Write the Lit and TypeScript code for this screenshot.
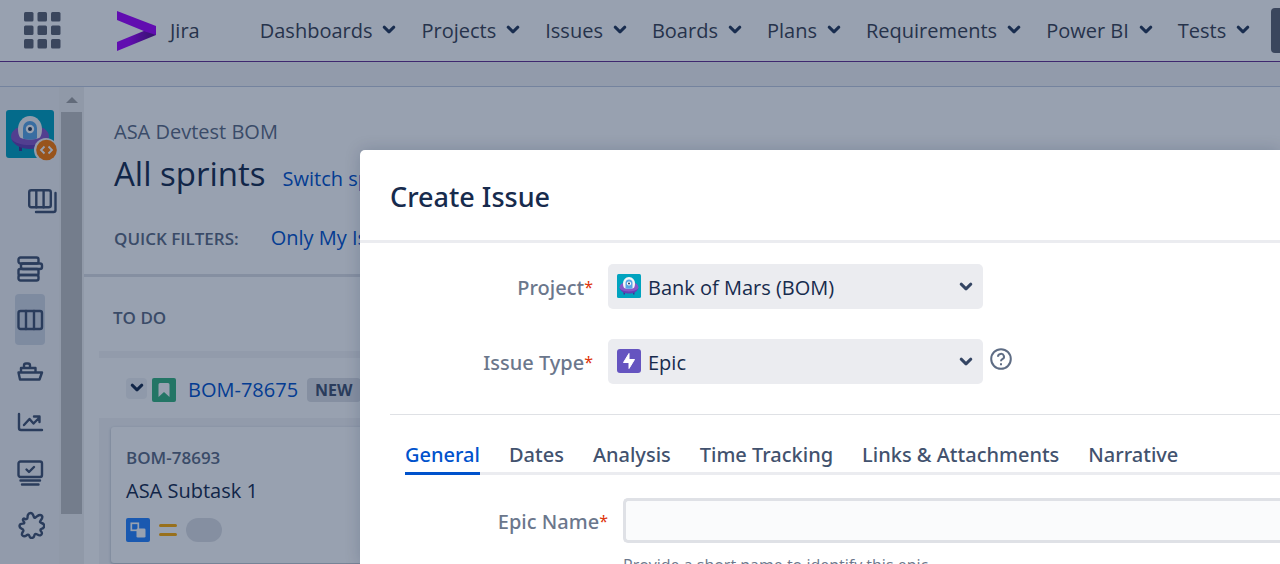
import { LitElement, html, svg, css } from "lit";
import { customElement, state } from "lit/decorators.js";

const chevron = html`<svg class="chevron" width="14" height="10" viewBox="0 0 14 10" aria-hidden="true">
  <path d="M2.200 2.200 7 6.800l4.800-4.600" fill="none" stroke="currentColor" stroke-width="3" stroke-linecap="round" stroke-linejoin="round" />
</svg>`;

const avatar = (size: number) => html`<svg class="avatar" width=${size} height=${size} viewBox="0 0 48 48" aria-hidden="true">
  <rect width="48" height="48" rx="3" fill="#00a3bf" />
  <path d="M13 34v7h3v-7zM32 34v7h3v-7z" fill="#403294" />
  <ellipse cx="24" cy="26.500" rx="19" ry="11.500" fill="#8757c8" />
  <path d="M5.500 29c2 6 9.500 10 18.500 10s16.500-4 18.500-10c-4 4-10 6-18.500 6s-15-2-18.500-6z" fill="#6440b5" />
  <path d="M12 19c0-7 5-13 12-13s12 6 12 13c0 3-.5 6-2 8.500-3 2.500-17 2.500-20 0-1.500-2.500-2-5.500-2-8.500z" fill="#f4f5f7" />
  <path d="M17 28.500V18a7 7 0 0 1 14 0v10.500c-4 1.500-10 1.500-14 0z" fill="#5aa6e6" />
  <circle cx="24" cy="19" r="4.200" fill="#fff" />
  <circle cx="24" cy="19" r="2" fill="#253858" />
</svg>`;

const stroked = (body: unknown) => html`<svg width="30" height="30" viewBox="0 0 30 30" fill="none" stroke="currentColor" stroke-width="2.400" stroke-linejoin="round" stroke-linecap="round" aria-hidden="true">${body}</svg>`;

const sideLinks = [
  { name: "Backlog", active: false, icon: svg`<rect x="3.500" y="3.500" width="20" height="6" rx="2"/><rect x="6" y="9.500" width="21" height="5.500" rx="2"/><rect x="3.500" y="15" width="20" height="6" rx="1.500"/><rect x="3.500" y="21" width="20" height="5.500" rx="2"/>` },
  { name: "Active sprints", active: true, icon: svg`<rect x="3.500" y="6" width="23.500" height="18" rx="2"/><path d="M11 6v18M19 6v18"/>` },
  { name: "Releases", active: false, icon: svg`<path d="M3.500 16.500h23.500l-2.500 7H5zM6 16.500V12h14.500v4.500M9 12V9.500a2 2 0 0 1 2-2h2a2 2 0 0 1 2 2V12"/>` },
  { name: "Reports", active: false, icon: svg`<path d="M4 7v14a2 2 0 0 0 2 2h21M9 18l5.500-6 4 4.500 6-6M19 9.500h5.500V15"/>` },
  { name: "Tests", active: false, icon: svg`<rect x="3.500" y="3.500" width="23.500" height="15.500" rx="2"/><path d="m11.500 11.500 2.500 2.500 5-5M5.500 22.500h19.500M7 26.500h16.500"/>` },
  { name: "Add-ons", active: false, icon: svg`<path transform="translate(1 1)" d="M8 8.500c1.500 1 3.500 1 3.500-.800 0-1.500.300-4.700 3-4.700s2.800 2.700 3.500 4.200c.600 1.200 2 0 3.500-1.200s4-1.500 4.700.200c.700 2-.7 3.300-1.700 4.500s-.3 2 1 2.300c1.800.500 3 1.500 2.700 3.300s-1.500 2.200-2.700 2.500c-1.500.400-1.200 1.700-.3 2.700 1.200 1.400.800 3.300-.9 3.800-1.600.500-2.800-.8-4-1.300-1.300-.5-1.700.5-2 1.700-.3 1.300-1.300 2.300-2.800 2.300s-2-1.300-2.300-2.500c-.4-1.400-1.700-1-2.900 0-1.300 1-3.500 1-4.200-.5-.7-1.600.6-2.700 1.200-4 .500-1.300-.5-1.800-1.800-2.400s-2.300-1.800-1.800-3.400 1.800-1.600 3.300-1.600 1.700-1.100.7-2.100c-1.200-1.200-1-2.800.3-3z"/>` },
];

@customElement("app-root")
export class AppRoot extends LitElement {
  @state() private tab = "General";

  static styles = css`
    :host {
      display: block;
      height: 100vh;
      overflow: hidden;
      position: relative;
      font: 20px/30px "Open Sans", "Noto Sans", sans-serif;
      color: #172b4d;
      background: #fff;
    }
    * { box-sizing: border-box; }
    a { color: #0052cc; text-decoration: none; }
    button, select, input { font: inherit; color: inherit; }
    button { border: 0; background: none; padding: 0; }
    h1, h2, h3, p { margin: 0; font-weight: 400; }
    svg { display: block; flex: none; }

    .page { display: flex; flex-direction: column; height: 100%; }
    .top {
      display: flex; align-items: center; flex: none;
      height: 62px; padding-left: 24px;
      border-bottom: 1px solid #643090;
      white-space: nowrap;
    }
    .apps { color: #5e6270; }
    .logo { display: flex; align-items: center; gap: 14px; margin-left: 56px; color: #3c4352; }
    .nav { display: flex; gap: 25px; margin-left: 60px; }
    .nav button { display: flex; align-items: center; gap: 10px; color: #3c4352; padding-top: 1px; }
    .nav .chevron { color: #253858; margin-bottom: 2px; }
    .create { flex: none; width: 100px; height: 45px; margin-left: 21px; border-radius: 4px; background: #5e6270; color: #fff; }
    .banner { flex: none; height: 25px; background: #f4f5f7; border-bottom: 1px solid #c1cce0; }

    .body { display: flex; flex: 1; min-height: 0; }
    .side { flex: none; width: 59px; background: #f4f5f7; padding-top: 23px; color: #42526e; overflow: hidden; }
    .project { display: block; position: relative; width: 48px; margin-left: 6px; }
    .badge { position: absolute; left: 28px; top: 28px; }
    .boards { display: block; margin: 26px 0 0 27px; color: inherit; }
    .links { display: flex; flex-direction: column; margin-top: 29px; padding-left: 15px; }
    .links a { display: grid; place-items: center; width: 30px; height: 51px; border-radius: 4px; color: inherit; }
    .links .active { background: #d3d9e4; }
    .scroll { flex: none; width: 25px; padding: 0 2px 50px; background: #f1f1f1; display: flex; flex-direction: column; align-items: center; }
    .thumb { flex: 1; width: 21px; margin-top: 9px; background: #c1c1c1; }
    .scroll svg { margin-top: 10px; }

    .main { flex: 1; min-width: 0; padding-top: 30px; white-space: nowrap; }
    .heading { padding: 0 30px; height: 157px; }
    .crumb { color: #5e6c84; }
    .title { display: flex; align-items: baseline; gap: 17px; margin-top: 3px; line-height: 48px; }
    .title h1 { font-size: 33px; }
    .filters { display: flex; align-items: baseline; gap: 32px; margin-top: 20px; }
    .caps { font-size: 17px; font-weight: 600; color: #5e6c84; }
    .board { border-top: 3px solid #dfe1e6; padding: 26px 0 0 15px; }
    .columns { padding-left: 14px; height: 48px; }
    .strip { height: 7px; background: #f4f5f7; }
    .lane { display: flex; align-items: center; height: 60px; padding: 4px 0 0 27px; }
    .toggle { display: grid; place-items: center; width: 21px; height: 21px; margin: 0 5px 4px 0; border-radius: 4px; background: #f0f1f5; }
    .key { margin: 0 9px 0 12px; }
    .lozenge { padding: 0 8px; border-radius: 4px; background: #dfe1e6; font-size: 16px; font-weight: 700; line-height: 24px; color: #42526e; }
    .column { background: #f4f5f7; padding: 9px 12px; height: 300px; }
    .card { height: 136px; padding: 16px 15px; border-radius: 3px; background: #fff; box-shadow: 0 1px 3px rgba(9, 30, 66, .3); }
    .card h3 { font-size: 20px; line-height: 36px; }
    .card .caps { line-height: 30px; }
    .meta { display: flex; align-items: center; gap: 9px; margin-top: 9px; }
    .pill { width: 36px; height: 24px; border-radius: 12px; background: #dfe1e6; }

    .blanket { position: absolute; inset: 0; background: rgba(9, 30, 66, .42); padding: 150px 0 0 360px; }
    .dialog { height: 100%; background: #fff; border-radius: 5px 0 0 0; box-shadow: 0 0 16px rgba(9, 30, 66, .18); overflow: hidden; }
    .dialog header { height: 93px; padding-left: 30px; border-bottom: 3px solid #ebecf0; }
    .dialog h2 { font-family: "Noto Sans", "Open Sans", sans-serif; font-size: 27px; line-height: 94px; font-weight: 500; }
    .form { padding: 21px 0 0 30px; }
    .field { display: grid; grid-template-columns: 203px 375px auto; column-gap: 15px; align-items: center; justify-content: start; margin-bottom: 30px; }
    .form label { font-family: "Noto Sans", "Open Sans", sans-serif; text-align: right; line-height: 47px; font-weight: 500; color: #6b778c; margin-bottom: -2px; }
    .star { color: #de350b; font-size: 16px; font-weight: 400; vertical-align: 2px; line-height: 16px; }
    .pick { position: relative; }
    .pick select { display: block; appearance: none; width: 100%; height: 45px; padding: 2px 40px 0; border: 0; border-radius: 5px; background: #ebecf0; font-size: 20px; }
    .pick .lead { position: absolute; left: 9px; top: 10px; pointer-events: none; }
    .pick .chevron { position: absolute; right: 10px; top: 18px; pointer-events: none; color: #344563; }
    .help { display: block; margin: 0 0 6px -8px; color: #5e6c84; }
    .panel { border-top: 1px solid #dfe1e5; padding: 24px 0 0 15px; }
    .tabs { display: flex; gap: 29px; border-bottom: 3px solid #ebecf0; white-space: nowrap; }
    .tabs button { height: 36px; padding-bottom: 2px; margin-bottom: -3px; border-bottom: 3px solid transparent; font-family: "Noto Sans", "Open Sans", sans-serif; font-weight: 500; color: #42526e; }
    .tabs .on { color: #0052cc; border-color: #0052cc; }
    .entry { display: grid; grid-template-columns: 203px 1fr; column-gap: 15px; margin-top: 23px; }
    .entry input { display: block; width: 100%; height: 45px; border: 3px solid #dfe1e6; border-right: 0; border-radius: 5px 0 0 5px; background: #fafbfc; padding: 0 10px; outline: 0; }
    .hint { font-size: 16px; line-height: 24px; margin-top: 10px; color: #6b778c; }
  `;

  render() {
    const menus = ["Dashboards", "Projects", "Issues", "Boards", "Plans", "Requirements", "Power BI", "Tests"];
    const tabs = ["General", "Dates", "Analysis", "Time Tracking", "Links & Attachments", "Narrative"];
    return html`
      <div class="page">
        <header class="top">
          <button class="apps" aria-label="Switch application">
            <svg width="37" height="37" viewBox="0 0 37 37" fill="currentColor">
              ${[0, 13.5, 27].map((y) => [0, 13.5, 27].map((x) => svg`<rect x=${x} y=${y} width="9.500" height="9.500" rx="1.500"/>`))}
            </svg>
          </button>
          <a class="logo" href="#home">
            <svg width="39" height="40" viewBox="0 0 39 40">
              <defs><linearGradient id="fold" x1="0" x2="1"><stop offset=".3" stop-color="#a100ff" /><stop offset=".9" stop-color="#5a0a96" /></linearGradient></defs>
              <path d="M0 31 39 15v9L0 40z" fill="url(#fold)" />
              <path d="M0 0v9l28 11.500 11 3.500v-9z" fill="#a100ff" />
            </svg>
            Jira
          </a>
          <nav class="nav">${menus.map((m) => html`<button>${m}${chevron}</button>`)}</nav>
          <button class="create" aria-label="Create"></button>
        </header>
        <div class="banner"></div>
        <div class="body">
          <aside class="side">
            <a class="project" href="#project" aria-label="Bank of Mars">
              ${avatar(48)}
              <svg class="badge" width="24" height="24" viewBox="0 0 24 24">
                <circle cx="12" cy="12" r="12" fill="#f4f5f7" /><circle cx="12.500" cy="12" r="10.300" fill="#ff7a00" />
                <path d="m10.500 8.500-3.500 3.500 3.500 3.500M14.500 8.500l3.500 3.500-3.500 3.500" fill="none" stroke="#fff" stroke-width="1.800" />
              </svg>
            </a>
            <a class="boards" href="#boards" aria-label="Boards">
              <svg width="31" height="30" viewBox="0 0 31 30" fill="none" stroke="currentColor" stroke-width="2.400" stroke-linejoin="round" stroke-linecap="round">
                <rect x="2.200" y="6.200" width="21.600" height="17" rx="2" /><path d="M9.300 6.200v17M16.600 6.200v17M9 28h17.500a2 2 0 0 0 2-2V9" />
              </svg>
            </a>
            <nav class="links">
              ${sideLinks.map((l) => html`<a href="#${l.name}" class=${l.active ? "active" : ""} aria-label=${l.name}>${stroked(l.icon)}</a>`)}
            </nav>
          </aside>
          <div class="scroll">
            <svg width="12" height="6" viewBox="0 0 12 6"><path d="M0 6 6 0l6 6z" fill="#a3a3a3" /></svg>
            <div class="thumb"></div>
          </div>
          <main class="main">
            <div class="heading">
              <p class="crumb">ASA Devtest BOM</p>
              <div class="title"><h1>All sprints</h1><a href="#switch">Switch sprint</a></div>
              <div class="filters"><span class="caps">QUICK FILTERS:</span><a href="#mine">Only My Issues</a></div>
            </div>
            <section class="board">
              <div class="columns caps">TO DO</div>
              <div class="strip"></div>
              <div class="lane">
                <button class="toggle" aria-label="Collapse">${chevron}</button>
                <svg width="24" height="24" viewBox="0 0 24 24"><rect width="24" height="24" rx="2" fill="#36b37e" /><path d="M6.500 6.500a1.500 1.500 0 0 1 1.500-1.500h8a1.500 1.500 0 0 1 1.500 1.500V19L12 14l-5.500 5z" fill="#fff" /></svg>
                <a class="key" href="#78675">BOM-78675</a>
                <span class="lozenge">NEW</span>
              </div>
              <div class="column">
                <article class="card">
                  <p class="caps">BOM-78693</p>
                  <h3>ASA Subtask 1</h3>
                  <div class="meta">
                    <svg width="24" height="24" viewBox="0 0 24 24"><rect width="24" height="24" rx="2" fill="#2684ff" /><rect x="5.300" y="5.300" width="7" height="7" fill="none" stroke="#fff" stroke-width="1.700" /><rect x="10.500" y="10.500" width="9" height="9" rx="1.300" fill="#fff" /></svg>
                    <svg width="18" height="12" viewBox="0 0 18 12"><path d="M1.500 1.500h15M1.500 10.500h15" stroke="#ffab00" stroke-width="3" stroke-linecap="round" /></svg>
                    <span class="pill"></span>
                  </div>
                </article>
              </div>
            </section>
          </main>
        </div>
      </div>

      <div class="blanket">
        <section class="dialog" role="dialog" aria-labelledby="dialog-title">
          <header><h2 id="dialog-title">Create Issue</h2></header>
          <div class="form">
            <div class="field">
              <label for="project">Project<span class="star">*</span></label>
              <div class="pick">
                <select id="project"><option>Bank of Mars (BOM)</option></select>
                <span class="lead">${avatar(24)}</span>${chevron}
              </div>
            </div>
            <div class="field">
              <label for="type">Issue Type<span class="star">*</span></label>
              <div class="pick">
                <select id="type"><option>Epic</option></select>
                <span class="lead"><svg width="24" height="24" viewBox="0 0 24 24"><rect width="24" height="24" rx="3" fill="#6554c0" /><path d="M12 4.500 6.500 13.500h5.500v6L17.500 10.500H12z" fill="#fff" stroke="#fff" stroke-linejoin="round" /></svg></span>${chevron}
              </div>
              <a class="help" href="#help" aria-label="Help">
                <svg width="22" height="22" viewBox="0 0 22 22" fill="none" stroke="currentColor" stroke-width="2"><circle cx="11" cy="11" r="9.800" /><path d="M8 8.800a3 2.800 0 1 1 4.300 2.400c-.9.500-1.300 1-1.300 2.100" /><path d="M11 15.200v2" /></svg>
              </a>
            </div>
            <div class="panel">
              <div class="tabs" role="tablist">
                ${tabs.map((t) => html`<button role="tab" class=${t === this.tab ? "on" : ""} @click=${() => (this.tab = t)}>${t}</button>`)}
              </div>
              <div class="entry">
                <label for="epic">Epic Name<span class="star">*</span></label>
                <div><input id="epic" type="text" /><p class="hint">Provide a short name to identify this epic.</p></div>
              </div>
            </div>
          </div>
        </section>
      </div>
    `;
  }
}
